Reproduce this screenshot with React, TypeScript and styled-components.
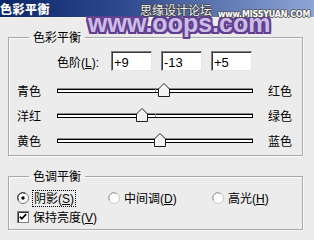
import React from "react";
import styled, { createGlobalStyle } from "styled-components";

const GlobalStyle = createGlobalStyle`
  html, body {
    margin: 0;
    padding: 0;
    background: #ececec;
  }
  body {
    font-family: "Liberation Sans", "Noto Sans CJK SC", sans-serif;
    font-size: 12px;
    color: #000;
  }
`;

const Window = styled.div`
  position: relative;
  width: 314px;
  height: 240px;
  overflow: hidden;
  background: #ececec;
`;

const TitleBar = styled.div`
  height: 17px;
  display: flex;
  align-items: center;
  background: linear-gradient(90deg, #0c2768 0%, #2f4a8e 40%, #8ea6d6 100%);
  border-bottom: 1px solid #f4f4f4;
`;

const Title = styled.span`
  font-family: "Noto Sans CJK SC", sans-serif;
  font-weight: 900;
  font-size: 12px;
  line-height: 17px;
  color: #fff;
  letter-spacing: 0.5px;
`;

const Forum = styled.span`
  position: absolute;
  left: 140px;
  top: 3px;
  font-family: "Noto Sans CJK SC", sans-serif;
  font-size: 12px;
  line-height: 14px;
  color: #efefef;
  text-shadow: -1px 0 #444, 1px 0 #444, 0 -1px #444, 0 1px #444;
`;

const Site = styled.span`
  position: absolute;
  left: 218px;
  top: 10px;
  font-family: "DejaVu Sans", sans-serif;
  font-weight: 700;
  font-size: 8px;
  line-height: 10px;
  color: #fff;
  letter-spacing: -0.2px;
  text-shadow: -1px 0 #555, 1px 0 #555, 0 -1px #555, 0 1px #555;
`;

const BigMark = styled.span`
  position: absolute;
  left: 88px;
  top: 9px;
  font-family: "Liberation Sans", sans-serif;
  font-weight: 700;
  font-size: 25px;
  line-height: 28px;
  color: #cdbde6;
  letter-spacing: 0;
  text-shadow: -2px 0 #62408f, 2px 0 #62408f, 0 -2px #62408f, 0 2px #62408f,
    -1px -1px #62408f, 1px 1px #62408f, -1px 1px #62408f, 1px -1px #62408f,
    -2px 2px #62408f, 2px 2px #62408f, -2px -2px #62408f, 2px -2px #62408f;
`;

const Body = styled.div`
  padding: 0 11px 0 8px;
`;

const Group = styled.fieldset<{ $top: number; $bottom: number }>`
  margin: ${(p) => p.$top}px 0 0 0;
  padding: 0 8px ${(p) => p.$bottom}px 8px;
  border: 1px solid #a9a9a9;
  box-shadow: inset 1px 1px 0 #fbfbfb, 1px 1px 0 #fbfbfb;
  min-width: 0;
`;

const Legend = styled.legend`
  margin-left: 12px;
  padding: 0 4px;
  font-family: "Noto Sans CJK SC", sans-serif;
  font-size: 12px;
  line-height: 14px;
`;

const LevelRow = styled.div`
  display: flex;
  align-items: center;
  gap: 9px;
  margin-top: 7px;
  margin-bottom: 7px;
  padding-left: 40px;
`;

const LevelLabel = styled.span`
  flex: none;
  width: 45px;
  font-size: 12px;
  white-space: nowrap;
`;

const NumBox = styled.div`
  flex: none;
  width: 37px;
  height: 16px;
  padding: 2px 0 0 2px;
  background: #fff;
  border-top: 1px solid #7e7e7e;
  border-left: 1px solid #7e7e7e;
  border-right: 1px solid #e6e6e6;
  border-bottom: 1px solid #e6e6e6;
  box-shadow: inset 1px 1px 0 #3a3a3a;
  font-family: "Liberation Sans", sans-serif;
  font-size: 13px;
  line-height: 17px;
`;

const SliderRow = styled.div`
  display: flex;
  align-items: center;
  height: 25px;
`;

const SliderLabel = styled.span<{ $w?: number }>`
  flex: none;
  width: ${(p) => (p.$w ? `${p.$w}px` : "auto")};
  font-family: "Noto Sans CJK SC", sans-serif;
  font-size: 12px;
`;

const TrackWrap = styled.div`
  flex: none;
  position: relative;
  width: 196px;
  height: 25px;
  display: flex;
  align-items: center;
  margin-right: 15px;
`;

const Track = styled.div`
  width: 194px;
  height: 2px;
  background: #fff;
  border: 1px solid #000;
  box-shadow: 0 -1px 0 #8a8a8a;
`;

const Tick = styled.div`
  position: absolute;
  left: 98px;
  top: 11px;
  width: 1px;
  height: 3px;
  background: #9a9a9a;
`;

const Thumb = styled.svg`
  position: absolute;
  top: 5px;
  width: 12px;
  height: 14px;
`;

const Bottom = styled.div`
  display: flex;
  flex-direction: column;
  gap: 5px;
  margin-top: 8px;
`;

const RadioRow = styled.div`
  display: flex;
  align-items: center;
  height: 14px;
`;

const Option = styled.label<{ $w?: number }>`
  flex: none;
  display: flex;
  align-items: center;
  gap: 4px;
  width: ${(p) => (p.$w ? `${p.$w}px` : "auto")};
  font-family: "Noto Sans CJK SC", sans-serif;
  font-size: 12px;
  line-height: 14px;
  white-space: nowrap;
`;

const Focus = styled.span`
  outline: 1px dotted #000;
  outline-offset: 0;
  padding: 0 1px;
`;

const Mark = styled.svg`
  flex: none;
  width: 12px;
  height: 12px;
`;

const Latin = styled.span`
  font-family: "Liberation Sans", sans-serif;
  font-size: 12px;
`;

const Radio = ({ on }: { on?: boolean }) => (
  <Mark viewBox="0 0 12 12">
    <circle cx="6" cy="6" r="5.5" fill="#fff" stroke={on ? "#7a7a7a" : "#c9c9c9"} />
    <path d="M1.6 8.5 A5 5 0 0 1 8.5 1.6" fill="none" stroke={on ? "#2a2a2a" : "#9a9a9a"} />
    {on && <circle cx="6" cy="6" r="1.7" fill="#000" />}
  </Mark>
);

const Check = () => (
  <Mark viewBox="0 0 12 12">
    <rect x="0.5" y="0.5" width="11" height="11" fill="#fff" stroke="#7e7e7e" />
    <path d="M1.5 11 V1.5 H11" fill="none" stroke="#303030" />
    <path d="M2.8 5.6 L4.8 7.8 L9.2 3.2" fill="none" stroke="#000" strokeWidth="1.8" />
  </Mark>
);

const sliders = [
  { left: "青色", right: "红色", value: 9 },
  { left: "洋红", right: "绿色", value: -13 },
  { left: "黄色", right: "蓝色", value: 5 },
];

const thumbLeft = (v: number) => 98 + (v / 100) * 98 - 6;

export default function App() {
  return (
    <Window>
      <GlobalStyle />
      <TitleBar>
        <Title>色彩平衡</Title>
      </TitleBar>
      <BigMark>www.oops.com</BigMark>
      <Forum>思缘设计论坛</Forum>
      <Site>www.MISSYUAN.COM</Site>
      <Body>
        <Group $top={12} $bottom={2}>
          <Legend>色彩平衡</Legend>
          <LevelRow>
            <LevelLabel>
              色阶(<u>L</u>):
            </LevelLabel>
            {sliders.map((s) => (
              <NumBox key={s.left}>{s.value > 0 ? `+${s.value}` : s.value}</NumBox>
            ))}
          </LevelRow>
          {sliders.map((s) => (
            <SliderRow key={s.left}>
              <SliderLabel $w={40}>{s.left}</SliderLabel>
              <TrackWrap>
                <Track />
                <Tick />
                <Thumb viewBox="0 0 12 14" style={{ left: thumbLeft(s.value) }}>
                  <path d="M6 0.5 L11.5 6 L11.5 13.5 L0.5 13.5 L0.5 6 Z" fill="#f2f2f2" stroke="#1e1e1e" />
                  <path d="M1.5 12.5 V6.4 L6 1.9" fill="none" stroke="#fff" />
                </Thumb>
              </TrackWrap>
              <SliderLabel>{s.right}</SliderLabel>
            </SliderRow>
          ))}
        </Group>
        <Group $top={13} $bottom={5}>
          <Legend>色调平衡</Legend>
          <Bottom>
            <RadioRow>
              <Option $w={91}>
                <Radio on />
                <Focus>
                  阴影<Latin>(<u>S</u>)</Latin>
                </Focus>
              </Option>
              <Option $w={104}>
                <Radio />
                <span>
                  中间调<Latin>(<u>D</u>)</Latin>
                </span>
              </Option>
              <Option>
                <Radio />
                <span>
                  高光<Latin>(<u>H</u>)</Latin>
                </span>
              </Option>
            </RadioRow>
            <RadioRow>
              <Option>
                <Check />
                <span>
                  保持亮度<Latin>(<u>V</u>)</Latin>
                </span>
              </Option>
            </RadioRow>
          </Bottom>
        </Group>
      </Body>
    </Window>
  );
}
